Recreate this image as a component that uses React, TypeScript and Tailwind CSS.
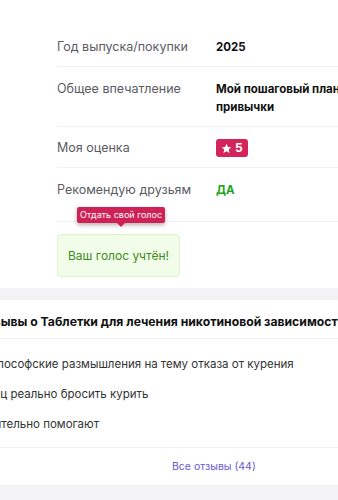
import React from 'react';

const Star = () => (
  <svg width="11" height="11" viewBox="0 0 24 24" fill="currentColor">
    <path d="M12 1.8l3.1 6.9 7.4.7-5.6 5 1.7 7.4L12 17.9l-6.6 3.9 1.7-7.4-5.6-5 7.4-.7z" />
  </svg>
);

export default function App() {
  return (
    <div className="w-[338px] h-[500px] overflow-hidden bg-[#f3f3f5] text-[13px]" style={{ fontFamily: 'Inter, "Noto Sans", sans-serif' }}>
      {/* Review details */}
      <div className="bg-white pb-[11px]">
        <div className="h-[27px] overflow-hidden relative">
          <p className="absolute -top-[19px] left-[57px] whitespace-nowrap text-[#555] text-[12.5px] leading-[18px]">
            Это мой опыт, другим группам курильщиков у других групп курящих друзья
          </p>
        </div>
        <div className="pl-[57px]">
          <div className="flex h-[40px] pt-[11px] border-b border-[#f1f1f3] leading-[18px]">
            <div className="w-[159px] shrink-0 text-[12.5px] text-[#5b5b63]">Год выпуска/покупки</div>
            <div className="font-bold text-[11.5px] text-[#111]">2025</div>
          </div>
          <div className="flex h-[60px] pt-[13px] border-b border-[#f1f1f3] leading-[18px]">
            <div className="w-[159px] shrink-0 text-[12.5px] text-[#5b5b63]">Общее впечатление</div>
            <div className="w-[200px] shrink-0 font-bold text-[11.5px] text-[#111]">
              <div className="whitespace-nowrap">Мой пошаговый план отказа от</div>
              <div>привычки</div>
            </div>
          </div>
          <div className="flex h-[41px] pt-[12px] border-b border-[#f1f1f3] leading-[18px]">
            <div className="w-[159px] shrink-0 text-[12.5px] text-[#5b5b63]">Моя оценка</div>
            <div className="flex items-center gap-[3px] h-[18px] px-[5px] rounded-[3px] bg-[#d4245c] text-white font-bold text-[12px]">
              <Star />
              <span>5</span>
            </div>
          </div>
          <div className="flex h-[54px] pt-[13px] border-b border-[#f1f1f3] leading-[18px]">
            <div className="w-[159px] shrink-0 text-[12.5px] text-[#5b5b63]">Рекомендую друзьям</div>
            <div className="font-bold text-[11.5px] text-[#1ca41c]">ДА</div>
          </div>
          <div className="relative mt-[12px]">
            <div className="absolute -top-[27px] left-[20px] flex flex-col items-center">
              <div className="h-[16px] px-[3px] rounded-[2px] bg-[#cf2156] text-white text-[9px] leading-[16px] whitespace-nowrap shadow-[0_2px_4px_rgba(0,0,0,0.3)]">
                Отдать свой голос
              </div>
              <div className="w-0 h-0 border-l-[4px] border-r-[4px] border-t-[4px] border-l-transparent border-r-transparent border-t-[#cf2156]" />
            </div>
            <div className="w-[123px] h-[43px] flex items-center justify-center rounded-[4px] bg-[#f1fce9] border border-[#dcf3cc] text-[#3f8a22] text-[12px]">
              Ваш голос учтён!
            </div>
          </div>
        </div>
      </div>

      {/* Other reviews */}
      <div className="mt-[12px] bg-white">
        <div className="h-[39px] flex items-start pt-[13px] border-b border-[#f1f1f3]">
          <h2 className="-ml-[21px] whitespace-nowrap font-bold text-[12.2px] leading-[18px] text-[#111]">
            Отзывы о Таблетки для лечения никотиновой зависимости
          </h2>
        </div>
        <div className="flex flex-col pt-[16px] pb-[14px] gap-[12px] text-[11.5px] text-[#333] leading-[18px] border-b border-[#f1f1f3]">
          <div className="-ml-[19px] whitespace-nowrap">Философские размышления на тему отказа от курения</div>
          <div className="-ml-[45px] whitespace-nowrap">За месяц реально бросить курить</div>
          <div className="-ml-[47px] whitespace-nowrap">Действительно помогают</div>
        </div>
        <div className="h-[37px] flex items-center pl-[172px]">
          <span className="text-[#6a58d6] text-[10.5px]">Все отзывы (44)</span>
        </div>
      </div>
    </div>
  );
}
